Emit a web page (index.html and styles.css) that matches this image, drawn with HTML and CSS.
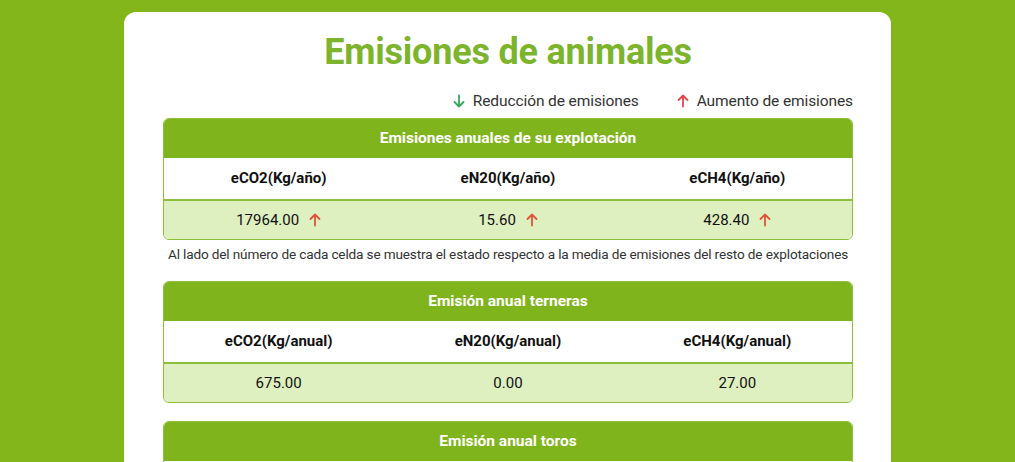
FILE: index.html
```html
<!DOCTYPE html>
<html lang="es">
<head>
<meta charset="utf-8">
<link rel="stylesheet" href="styles.css">
</head>
<body>
<div class="card">
  <h1 class="title">Emisiones de animales</h1>
  <div class="legend">
    <span class="legend-item"><svg class="arrow down" viewBox="0 0 12 14" width="12" height="14"><path d="M6 1.5V12.5M1.5 8L6 12.5L10.5 8" fill="none" stroke="currentColor" stroke-width="1.8" stroke-linecap="round" stroke-linejoin="round"/></svg>Reducción de emisiones</span>
    <span class="legend-item"><svg class="arrow up" viewBox="0 0 12 14" width="12" height="14"><path d="M6 12.5V1.5M1.5 6L6 1.5L10.5 6" fill="none" stroke="currentColor" stroke-width="1.8" stroke-linecap="round" stroke-linejoin="round"/></svg>Aumento de emisiones</span>
  </div>

  <div class="table">
    <div class="thead">Emisiones anuales de su explotación</div>
    <div class="row head-row">
      <div class="cell">eCO2(Kg/año)</div>
      <div class="cell">eN20(Kg/año)</div>
      <div class="cell">eCH4(Kg/año)</div>
    </div>
    <div class="row data-row">
      <div class="cell">17964.00<svg class="arrow up" viewBox="0 0 12 14" width="12" height="14"><path d="M6 12.5V1.5M1.5 6L6 1.5L10.5 6" fill="none" stroke="currentColor" stroke-width="1.8" stroke-linecap="round" stroke-linejoin="round"/></svg></div>
      <div class="cell">15.60<svg class="arrow up" viewBox="0 0 12 14" width="12" height="14"><path d="M6 12.5V1.5M1.5 6L6 1.5L10.5 6" fill="none" stroke="currentColor" stroke-width="1.8" stroke-linecap="round" stroke-linejoin="round"/></svg></div>
      <div class="cell">428.40<svg class="arrow up" viewBox="0 0 12 14" width="12" height="14"><path d="M6 12.5V1.5M1.5 6L6 1.5L10.5 6" fill="none" stroke="currentColor" stroke-width="1.8" stroke-linecap="round" stroke-linejoin="round"/></svg></div>
    </div>
  </div>
  <p class="note">Al lado del número de cada celda se muestra el estado respecto a la media de emisiones del resto de explotaciones</p>

  <div class="table">
    <div class="thead">Emisión anual terneras</div>
    <div class="row head-row">
      <div class="cell">eCO2(Kg/anual)</div>
      <div class="cell">eN20(Kg/anual)</div>
      <div class="cell">eCH4(Kg/anual)</div>
    </div>
    <div class="row data-row">
      <div class="cell">675.00</div>
      <div class="cell">0.00</div>
      <div class="cell">27.00</div>
    </div>
  </div>

  <div class="table">
    <div class="thead">Emisión anual toros</div>
    <div class="row head-row"></div>
  </div>
</div>
</body>
</html>
```

FILE: styles.css
```css
html, body {
  margin: 0;
  padding: 0;
}
body {
  background: #82b61b;
  font-family: Roboto, "Open Sans", sans-serif;
  color: #222;
  height: 462px;
  overflow: hidden;
  padding-top: 12px;
  box-sizing: border-box;
}
.card {
  width: 767px;
  margin-left: 124px;
  background: #fff;
  border-radius: 12px;
  padding: 19px 38px 40px 39px;
  box-sizing: border-box;
}
.title {
  margin: 0;
  text-align: center;
  color: #7cb42c;
  font-size: 36px;
  font-weight: 700;
  line-height: 42px;
  letter-spacing: -0.2px;
}
.legend {
  display: flex;
  justify-content: flex-end;
  gap: 38px;
  margin-top: 19px;
  font-size: 15.5px;
  line-height: 18px;
  color: #333;
  letter-spacing: -0.1px;
}
.legend-item {
  display: flex;
  align-items: center;
}
.legend-item .arrow {
  margin-right: 8px;
}
.arrow {
  display: inline-block;
  flex: none;
}
.arrow.down { color: #34a85c; }
.arrow.up { color: #e2454a; }
.table {
  margin-top: 8px;
  border: 1px solid #8dbf3c;
  border-radius: 6px;
  overflow: hidden;
}
.thead {
  background: #80b41c;
  color: #fff;
  text-align: center;
  font-weight: 700;
  font-size: 15.5px;
  height: 38px;
  line-height: 38px;
}
.row {
  display: grid;
  grid-template-columns: 1fr 1fr 1fr;
  text-align: center;
}
.head-row {
  background: #fff;
  height: 41px;
  line-height: 41px;
  font-weight: 700;
  font-size: 15px;
  border-top: 1px solid #80b41c;
  border-bottom: 2px solid #8dbf3c;
  color: #111;
}
.data-row {
  background: #def0c0;
  height: 38px;
  font-size: 15px;
  color: #111;
}
.data-row .cell {
  display: flex;
  align-items: center;
  justify-content: center;
}
.data-row .arrow {
  margin-left: 10px;
  color: #e0523a;
}
.note {
  margin: 6px 0 0;
  font-size: 13.6px;
  line-height: 16px;
  color: #333;
  text-align: center;
  letter-spacing: -0.15px;
  white-space: nowrap;
}
.note + .table {
  margin-top: 19px;
}
.table + .table {
  margin-top: 18px;
}
```
